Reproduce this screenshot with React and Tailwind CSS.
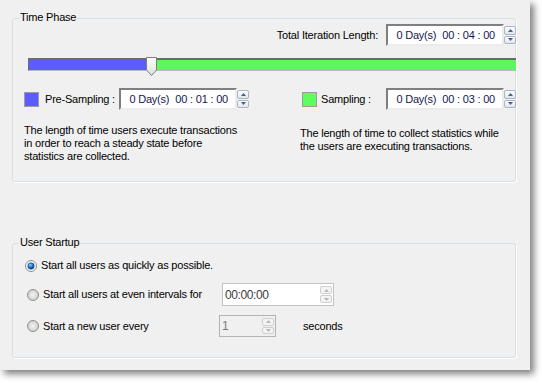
import React from 'react'

const font = "font-['Liberation_Sans',Arial,sans-serif]"

function Arrow({ up, color }) {
  return (
    <svg width="5" height="3" viewBox="0 0 5 3">
      {up ? <polygon points="0,3 5,3 2.5,0" fill={color} /> : <polygon points="0,0 5,0 2.5,3" fill={color} />}
    </svg>
  )
}

function UpDown({ disabled }) {
  const btn = disabled
    ? 'flex flex-1 items-center justify-center rounded-[2px] border border-[#cfcfcf] bg-[#f4f4f4]'
    : 'flex flex-1 items-center justify-center rounded-[2px] border border-[#aab5c6] bg-linear-to-b from-[#fbfcfd] to-[#e2e6ec]'
  const c = disabled ? '#b8b8b8' : '#4a5e84'
  return (
    <div className="flex h-full w-[12px] flex-col gap-[1px] py-[2px]">
      <div className={btn}><Arrow up color={c} /></div>
      <div className={btn}><Arrow color={c} /></div>
    </div>
  )
}

function DaySpin({ time }) {
  return (
    <div className="flex h-[22px] items-stretch">
      <div className="flex w-[118px] items-center justify-end gap-[6px] border-2 border-t-[#7f7f7f] border-l-[#7f7f7f] border-r-[#ececec] border-b-[#ececec] bg-white pr-[7px] text-[#16164e]">
        <span>0 Day(s)</span>
        <span>{time}</span>
      </div>
      <UpDown />
    </div>
  )
}

function Radio({ checked }) {
  return (
    <svg width="12" height="12" viewBox="0 0 12 12" className="shrink-0">
      <defs>
        <radialGradient id="rg-off" cx="0.5" cy="0.5" r="0.5">
          <stop offset="0" stopColor="#f2f2f2" />
          <stop offset="0.7" stopColor="#dadada" />
          <stop offset="1" stopColor="#cfcfcf" />
        </radialGradient>
        <radialGradient id="rg-dot" cx="0.4" cy="0.35" r="0.6">
          <stop offset="0" stopColor="#9fd4ff" />
          <stop offset="0.5" stopColor="#2a83d6" />
          <stop offset="1" stopColor="#0b3f82" />
        </radialGradient>
      </defs>
      <circle cx="6" cy="6" r="5.5" fill={checked ? '#f4f4f4' : 'url(#rg-off)'} stroke="#8e8f8f" strokeWidth="1" />
      {checked && <circle cx="6" cy="6" r="3.2" fill="url(#rg-dot)" stroke="#1c4f8c" strokeWidth="0.6" />}
    </svg>
  )
}

function Group({ title, className, children }) {
  return (
    <div className={`relative ml-[12px] w-[504px] rounded-[3px] border border-[#d5dfe5] shadow-[1px_1px_0_#ffffff] ${className}`}>
      <span className="absolute -top-[8px] left-[6px] bg-[#f0f0f0] px-[1px] leading-[13px] text-black">{title}</span>
      {children}
    </div>
  )
}

export default function App() {
  return (
    <div className={`h-[383px] w-[542px] bg-white ${font} text-[11px] tracking-[-0.2px] text-black`}>
      <div className="h-[370px] w-[530px] bg-[#f0f0f0] pt-[18px] shadow-[4px_4px_7px_rgba(0,0,0,0.5)]">
        <Group title="Time Phase" className="h-[164px]">
          {/* total length */}
          <div className="-mr-[1px] mt-[5px] flex items-center justify-end gap-[8px]">
            <span>Total Iteration Length:</span>
            <DaySpin time="00 : 04 : 00" />
          </div>

          {/* slider */}
          <div className="-mr-[1px] mt-[11px] flex h-[19px] items-start pl-[15px]">
            <div className="mt-[1px] flex h-[13px] flex-1 border-t-2 border-l border-b border-t-[#6b6b6b] border-l-[#6b6b6b] border-b-[#b8b8b8]">
              <div className="w-[118px] bg-[#5b5bff]" />
              <div className="flex-1 bg-[#5cf75c]" />
            </div>
          </div>
          <div className="pointer-events-none absolute left-[133px] top-[38px]">
            <svg width="11" height="19" viewBox="0 0 11 19">
              <defs>
                <linearGradient id="thumb" x1="0" y1="0" x2="0" y2="1">
                  <stop offset="0" stopColor="#ffffff" />
                  <stop offset="1" stopColor="#dedede" />
                </linearGradient>
              </defs>
              <polygon points="0.5,0.5 10.5,0.5 10.5,13 5.5,18.5 0.5,13" fill="url(#thumb)" stroke="#7d7d7d" strokeWidth="1" />
            </svg>
          </div>

          {/* phase rows */}
          <div className="-mr-[1px] mt-[12px] flex">
            <div className="w-[287px] pl-[11px]">
              <div className="flex h-[22px] items-center">
                <div className="h-[15px] w-[15px] border border-[#9c9c9c] bg-[#5b5bff]" />
                <span className="ml-[6px] w-[74px]">Pre-Sampling :</span>
                <DaySpin time="00 : 01 : 00" />
              </div>
              <p className="mt-[14px] w-[216px] leading-[13px]">
                The length of time users execute transactions in order to reach a steady state before statistics are collected.
              </p>
            </div>
            <div className="flex-1">
              <div className="flex h-[22px] items-center">
                <div className="ml-[2px] h-[15px] w-[15px] border border-[#9c9c9c] bg-[#5cff5c]" />
                <span className="ml-[4px] w-[65px]">Sampling :</span>
                <DaySpin time="00 : 03 : 00" />
              </div>
              <p className="mt-[17px] w-[210px] leading-[13px]">
                The length of time to collect statistics while the users are executing transactions.
              </p>
            </div>
          </div>
        </Group>

        <Group title="User Startup" className="mt-[61px] h-[115px]">
          <div className="mt-[14px] flex h-[15px] items-center gap-[4px] pl-[12px]">
            <Radio checked />
            <span>Start all users as quickly as possible.</span>
          </div>

          <div className="mt-[10px] flex h-[23px] items-center pl-[14px]">
            <Radio />
            <span className="ml-[4px] w-[179px]">Start all users at even intervals for</span>
            <div className="flex h-[23px] w-[112px] items-stretch border border-[#c3c3c3] bg-white pr-[1px]">
              <span className="flex flex-1 items-center pl-[2px] text-[12px] tracking-[-0.4px] text-[#3c3c3c]">00:00:00</span>
              <UpDown disabled />
            </div>
          </div>

          <div className="mt-[9px] flex h-[22px] items-center pl-[14px]">
            <Radio />
            <span className="ml-[4px] w-[176px]">Start a new user every</span>
            <div className="flex h-[22px] w-[57px] items-stretch border border-[#b4b4b4] bg-[#f0f0f0] pr-[1px]">
              <span className="flex flex-1 items-center pl-[2px] text-[12px] text-[#7a7a7a]">1</span>
              <UpDown disabled />
            </div>
            <span className="ml-[27px]">seconds</span>
          </div>
        </Group>
      </div>
    </div>
  )
}
